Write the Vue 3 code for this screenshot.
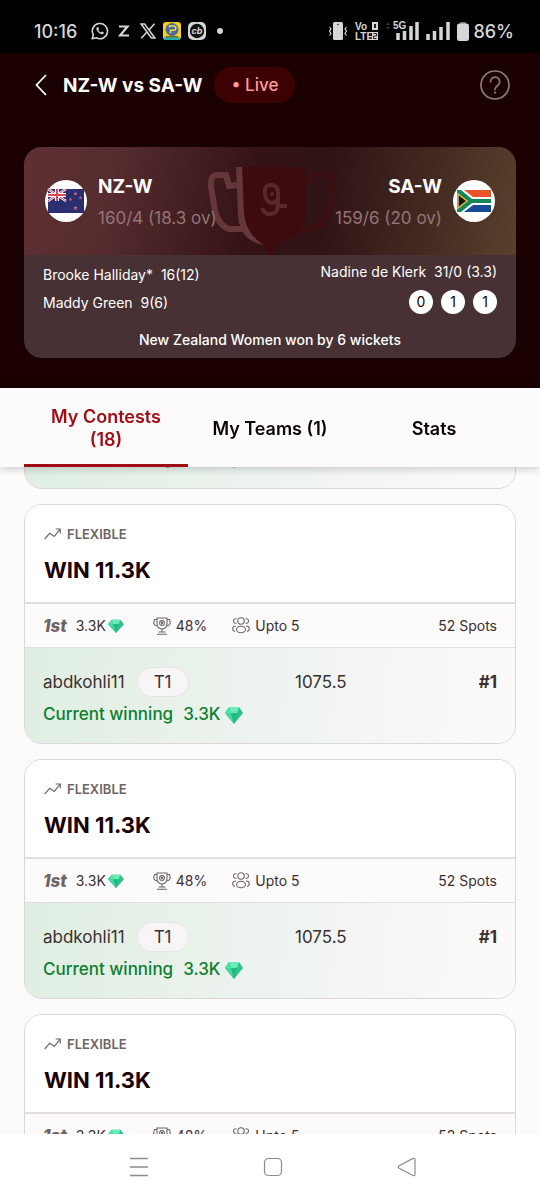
<script setup>
import { onMounted, ref } from 'vue'

const feed = ref(null)
const tabs = [
  { label: 'My Contests (18)', active: true },
  { label: 'My Teams (1)', active: false },
  { label: 'Stats', active: false },
]
const balls = [0, 1, 1]
const contests = [1, 2, 3, 4].map((id) => ({
  id,
  collapsed: id === 1,
  prize: 'WIN 11.3K',
  first: '3.3K',
  share: '48%',
  limit: 'Upto 5',
  spots: '52 Spots',
  user: 'abdkohli11',
  team: 'T1',
  points: '1075.5',
  rank: '#1',
  winning: '3.3K',
}))

onMounted(() => {
  feed.value.scrollTop = 44
})
</script>

<template>
  <div class="screen">
    <div class="status">
      <span class="clock">10:16</span>
      <div class="apps">
        <svg width="18" height="18" viewBox="0 0 18 18" fill="none" stroke="#d6d6d6" stroke-width="1.6">
          <path d="M1.2 16.8 2.3 12.8A7.6 7.6 0 1 1 5.2 15.7Z" stroke-linejoin="round" />
          <path d="M6 5.2c-1 1-.7 2.6.8 4.5 1.7 2.1 3.8 3.1 5.3 2.1.6-.4.8-.9.7-1.500l-1.900-.9-1 1c-1.200-.5-2.100-1.400-2.600-2.500l.7-.9-.8-2Z" fill="#d6d6d6" stroke="none" />
        </svg>
        <svg width="12" height="14" viewBox="0 0 12 14" fill="none" stroke="#d6d6d6" stroke-width="2.2">
          <path d="M1 2.500h8.500L2 11.500h9" />
        </svg>
        <svg width="16" height="16" viewBox="0 0 16 16" fill="none" stroke="#d6d6d6">
          <path d="M1.200 1h3.400l10.200 14h-3.400Z" stroke-width="1.5" />
          <path d="M14.500.7 9 7M6.800 9.200 1.200 15.300" stroke-width="1.6" />
        </svg>
        <svg width="18" height="18" viewBox="0 0 18 18">
          <rect width="18" height="18" rx="3" fill="#f5d01c" />
          <circle cx="9" cy="7.500" r="6.500" fill="#4a68a0" />
          <path d="M6.500 5.500V4h4.200a2.100 2.100 0 0 1 0 4.200H7.500v3" fill="none" stroke="#edda50" stroke-width="1.5" />
          <path d="M1 15.300h16v1.500a1.500 1.500 0 0 1-1.500 1.200h-13A1.500 1.500 0 0 1 1 16.500Z" fill="#25a7ad" />
          <path d="M3 14.700h12" stroke="#55612e" stroke-width="1.2" />
        </svg>
        <svg width="18" height="18" viewBox="0 0 18 18">
          <rect x="1" y="1" width="16" height="16" rx="4" fill="#d6d6d6" stroke="#d6d6d6" stroke-width="2" />
          <circle cx="9" cy="9" r="7.200" fill="#111" />
          <text x="9" y="12" text-anchor="middle" class="cb">cb</text>
        </svg>
        <svg width="6" height="6" viewBox="0 0 6 6"><circle cx="3" cy="3" r="3" fill="#d6d6d6" /></svg>
      </div>
      <div class="signals">
        <svg width="18" height="18" viewBox="0 0 18 18">
          <rect x="4" width="10" height="18" rx="1.500" fill="#d6d6d6" />
          <circle cx="9" cy="2.500" r=".8" fill="#222" />
          <path d="m.5 5 1.500 2-1.500 2L2 11.500.5 13.500M17.500 5 16 7l1.500 2-1.500 2.500 1.500 2" fill="none" stroke="#d6d6d6" stroke-width="1.2" />
        </svg>
        <svg class="volte" width="24" height="20" viewBox="0 0 24 20">
          <text x="0" y="9" class="tiny">Vo</text>
          <text x="0" y="19" class="tiny">LTE</text>
          <rect x="17" y="1" width="6" height="8" fill="#d6d6d6" />
          <rect x="19" y="3" width="2" height="4" fill="#222" />
          <rect x="17" y="11" width="6" height="8" fill="#d6d6d6" />
          <path d="M18.500 12.500h3v2.500h-3v2.500h3" fill="none" stroke="#222" stroke-width="1" />
        </svg>
        <svg class="fiveg" width="34" height="20" viewBox="0 0 34 20">
          <path d="m1 4 2-2.500L5 4ZM1 6l2 2.500L5 6Z" fill="#3a3a3a" />
          <text x="8" y="8" class="tiny">5G</text>
          <path d="M13 12v7M19.500 10v9M26 5v14M32 1v18" stroke="#d6d6d6" stroke-width="3.500" />
        </svg>
        <svg class="bars" width="24" height="20" viewBox="0 0 24 20">
          <path d="M2 13v6M8.500 10v9M15 6v13M22 1v18" stroke="#d6d6d6" stroke-width="3.500" />
        </svg>
        <svg width="12" height="19" viewBox="0 0 12 19" fill="#d6d6d6">
          <rect x="3" width="6" height="3" rx="1" fill="#777" />
          <rect y="1.500" width="12" height="17.500" rx="2.500" />
        </svg>
        <span class="charge">86%</span>
      </div>
    </div>

    <header class="hero">
      <div class="topbar">
        <button class="icon-btn" aria-label="Back">
          <svg width="12" height="22" viewBox="0 0 12 22" fill="none" stroke="#fff" stroke-width="1.8"><path d="M11 1 1.500 11 11 21" /></svg>
        </button>
        <h1>NZ-W vs SA-W</h1>
        <span class="live">• Live</span>
        <button class="icon-btn help" aria-label="Help">
          <svg width="30" height="30" viewBox="0 0 30 30" fill="none" stroke="#8b7b7b" stroke-width="1.7">
            <circle cx="15" cy="15" r="14" />
            <path d="M10.500 11.700a4.600 4.600 0 1 1 7.300 3.700c-1.800 1.300-2.800 2-2.800 4" stroke-linecap="round" />
            <circle cx="15" cy="22.500" r=".8" fill="#8b7b7b" stroke-width=".8" />
          </svg>
        </button>
      </div>

      <section class="match">
        <div class="score">
          <svg class="cup" width="136" height="96" viewBox="0 0 136 96" fill="none">
            <path d="M38 8h66v49q-2 17-20 24l-12 6-2 9h-4l-4-9Q41 76 38 55Z" fill="#3d0b0e" />
            <path d="M104 24l8-9h11q9 1 7 15l-5 26q-3 11-16 14l-10 2" stroke="#3c1013" stroke-width="6" />
            <path d="m35 26-8 1-3-11h-9q-7 0-6 12l4 24q4 15 14 18h17" stroke="#65373a" stroke-width="6" />
            <path d="M34 8h6l2 47q2 20 20 31Q38 82 36 57Z" fill="#65373a" />
            <path d="M60 49q2 6 8 6 8 0 8-10V34q0-8-7-8t-6 8q0 9 7 10 4 0 6-4M76 47h9" stroke="#57282d" stroke-width="4" />
            <circle cx="70" cy="35" r="2" fill="#57282d" />
          </svg>
          <div class="side">
            <svg class="flag" width="42" height="42" viewBox="0 0 42 42">
              <circle cx="21" cy="21" r="21" fill="#fff" />
              <path d="M3 9h36v24H3Z" fill="#2b2f70" />
              <path d="m3 9 18 12M21 9 3 21" stroke="#fff" stroke-width="2.500" />
              <path d="m3 9 18 12M21 9 3 21" stroke="#d94854" stroke-width="1" />
              <path d="M12 9v12M3 15h18" stroke="#fff" stroke-width="4" />
              <path d="M12 9v12M3 15h18" stroke="#d94854" stroke-width="2.2" />
              <g fill="#c8668a">
                <path d="m30.500 11.500.6 1.400 1.500.1-1.200 1 .4 1.500-1.300-.8-1.300.8.4-1.500-1.200-1 1.500-.1Z" />
                <path d="m25.500 17.500.5 1.200 1.200.1-.9.9.3 1.200-1.100-.7-1.100.7.3-1.200-.9-.9 1.200-.1Z" />
                <path d="m35.500 16 .5 1.100 1.200.1-.9.8.3 1.200-1.100-.6-1.100.6.3-1.200-.9-.8 1.200-.1Z" />
                <path d="m30.500 25.500.7 1.600 1.600.1-1.200 1.100.4 1.600-1.500-.9-1.500.9.4-1.600-1.200-1.100 1.600-.1Z" />
              </g>
            </svg>
            <div>
              <h2>NZ-W</h2>
              <p>160/4 (18.3 ov)</p>
            </div>
          </div>
          <div class="side away">
            <div>
              <h2>SA-W</h2>
              <p>159/6 (20 ov)</p>
            </div>
            <svg class="flag" width="42" height="42" viewBox="0 0 42 42">
              <circle cx="21" cy="21" r="21" fill="#fff" />
              <path d="M11 10h27v7H20Z" fill="#e9542c" />
              <path d="M11 32h27v-7H20Z" fill="#164c96" />
              <path d="M4 10h4l11 9h19v4H19L8 32H4Z" fill="#12885a" />
              <path d="m5 14 9 7-9 7Z" fill="#141414" stroke="#eab73c" stroke-width="1.5" />
            </svg>
          </div>
        </div>
        <div class="players">
          <div class="batters">
            <span>Brooke Halliday*&nbsp; 16(12)</span>
            <span>Maddy Green&nbsp; 9(6)</span>
          </div>
          <div class="bowler">
            <span>Nadine de Klerk&nbsp; 31/0 (3.3)</span>
            <div class="balls"><b v-for="(ball, i) in balls" :key="i">{{ ball }}</b></div>
          </div>
        </div>
        <p class="result">New Zealand Women won by 6 wickets</p>
      </section>
    </header>

    <nav class="tabs">
      <button v-for="tab in tabs" :key="tab.label" :class="{ active: tab.active }">{{ tab.label }}</button>
    </nav>

    <main ref="feed" class="feed">
      <article v-for="c in contests" :key="c.id" class="contest" :class="{ collapsed: c.collapsed }">
        <template v-if="!c.collapsed">
          <div class="head">
            <div class="kind">
              <svg width="17" height="12" viewBox="0 0 17 12" fill="none" stroke="#6d6565" stroke-width="1.2"><path d="m.7 11 5-5.800 4.600 3.200L15.800 1.500M11.700 1h4.500v4.500" /></svg>
              <span>FLEXIBLE</span>
            </div>
            <h3>{{ c.prize }}</h3>
          </div>
          <div class="facts">
            <em>1st</em>
            <span class="first">{{ c.first }}</span>
            <svg class="gem" width="16" height="16" viewBox="0 0 18 18">
              <path d="M4 2h10l4 5-9 10L0 7Z" fill="#2cc28a" />
              <path d="M4 2h10l-2 5H6Z" fill="#6cecb5" /><path d="M0 7h6l3 10Z" fill="#43d8a0" /><path d="M6 7h6L9 17Z" fill="#25b982" /><path d="m4 2 2 5H0Z" fill="#4fe0ab" />
            </svg>
            <svg class="trophy" width="18" height="18" viewBox="0 0 18 18" fill="none" stroke="#6d6666" stroke-width="1.1">
              <path d="M4 1h10v5.500q0 5-5 5.500-5-.5-5-5.500ZM4 2.500H1.500L.7 6q.3 2.500 3.800 3M14 2.500h2.500l.8 3.500q-.3 2.500-3.800 3M9 12v3M5.500 15h7M4 17.300h10" />
              <circle cx="9" cy="6" r="2.400" /><circle cx="9" cy="6" r=".6" />
            </svg>
            <span>{{ c.share }}</span>
            <svg class="people" width="18" height="17" viewBox="0 0 18 17" fill="none" stroke="#6d6666" stroke-width="1.1">
              <circle cx="9" cy="4" r="3.200" />
              <path d="M4.500 1.700Q1.500 1.500 1.500 4t3 2.300M13.500 1.700q3-.2 3 2.300t-3 2.300" />
              <ellipse cx="9" cy="12.500" rx="4.500" ry="3.300" />
              <path d="M4 9Q.7 9 .7 11.500T3 14.500M14 9q3.300 0 3.300 2.500T15 14.500" />
            </svg>
            <span>{{ c.limit }}</span>
            <span class="spots">{{ c.spots }}</span>
          </div>
        </template>
        <div class="entry">
          <div v-if="!c.collapsed" class="row">
            <div class="who"><span>{{ c.user }}</span><span class="team">{{ c.team }}</span></div>
            <span>{{ c.points }}</span>
            <strong>{{ c.rank }}</strong>
          </div>
          <div class="winning">
            <span>Current winning</span>
            <span>{{ c.winning }}</span>
            <svg width="18" height="18" viewBox="0 0 18 18">
              <path d="M4 1h10l4 6-9 11L0 7Z" fill="#2cc28a" />
              <path d="M4 1h10l-2 6H6Z" fill="#6cecb5" /><path d="M0 7h6l3 11Z" fill="#43d8a0" /><path d="M6 7h6L9 18Z" fill="#25b982" /><path d="m4 1 2 6H0Z" fill="#4fe0ab" />
            </svg>
          </div>
        </div>
      </article>
    </main>

    <footer class="sysnav">
      <button class="icon-btn" aria-label="Recent apps">
        <svg width="20" height="20" viewBox="0 0 20 20" fill="none" stroke="#8c8c8c" stroke-width="1.5"><path d="M1 1.500h18M1 10h18M1 18.500h18" /></svg>
      </button>
      <button class="icon-btn" aria-label="Home">
        <svg width="20" height="20" viewBox="0 0 20 20" fill="none" stroke="#8c8c8c" stroke-width="1.2"><rect x="1.500" y="1.500" width="17" height="17" rx="4" /></svg>
      </button>
      <button class="icon-btn" aria-label="Back to previous app">
        <svg width="20" height="20" viewBox="0 0 20 20" fill="none" stroke="#8c8c8c" stroke-width="1.2"><path d="M2.200 8.800 16 1.400q2-.7 2 1.600v14q0 2.300-2 1.500L2.200 11.200q-1.800-1.200 0-2.400Z" /></svg>
      </button>
    </footer>
  </div>
</template>

<style>
body {
  background: #fff;
}
</style>

<style scoped>
* {
  box-sizing: border-box;
  margin: 0;
}
.screen {
  display: flex;
  flex-direction: column;
  height: 100vh;
  font-family: Inter, "Open Sans", sans-serif;
  font-size: 14px;
  color: #3a3032;
}
button {
  padding: 0;
  border: 0;
  background: none;
  font: inherit;
  cursor: pointer;
}
svg {
  display: block;
  flex: none;
}
.status {
  flex: none;
  display: flex;
  align-items: center;
  padding: 9px 26px 0 34px;
  height: 53px;
  background: #000;
  color: #d6d6d6;
}
.clock {
  font-size: 18px;
  font-weight: 500;
}
.apps {
  display: flex;
  align-items: center;
  gap: 7px;
  margin-left: 14px;
}
.apps svg:nth-child(2) {
  margin: 0 3px 0 2px;
}
.apps svg:last-child {
  margin-left: 4px;
}
.signals {
  display: flex;
  align-items: center;
  margin-left: auto;
}
.volte {
  margin-left: 8px;
}
.fiveg {
  margin-left: 6px;
}
.bars {
  margin: 0 7px;
}
.charge {
  margin-left: 4px;
  font-size: 18px;
  font-weight: 500;
}
.cb {
  font: italic 700 9px Inter, sans-serif;
  fill: #d6d6d6;
}
.tiny {
  font: 700 10px "Liberation Sans", sans-serif;
  fill: #d6d6d6;
}
.hero {
  flex: none;
  padding: 14px 24px 30px;
  background: #1a0000;
  color: #fff;
}
.topbar {
  display: flex;
  align-items: center;
  height: 36px;
  padding: 0 6px 0 11px;
}
h1 {
  margin-left: 16px;
  font-size: 19px;
  font-weight: 700;
}
.live {
  margin-left: 12px;
  padding: 0 17px;
  border-radius: 18px;
  background: #3d0003;
  color: #ff9b9b;
  font-size: 17px;
  font-weight: 500;
  line-height: 36px;
}
.help {
  margin-left: auto;
}
.match {
  margin-top: 44px;
  border-radius: 18px;
  overflow: hidden;
  background: #473134;
}
.score {
  position: relative;
  display: flex;
  justify-content: space-between;
  height: 108px;
  padding: 28px 21px 0;
  background: linear-gradient(100deg, #5e3033 0%, #562c2f 18%, #351315 46%, #2f1315 60%, #432b21 82%, #5a402d 100%);
}
.cup {
  position: absolute;
  top: 12px;
  left: calc(50% - 68px);
}
.side {
  position: relative;
  display: flex;
  gap: 11px;
}
.away {
  text-align: right;
}
.flag {
  margin-top: 5px;
}
h2 {
  font-size: 19px;
  font-weight: 700;
  line-height: 24px;
}
.side p {
  margin-top: 7px;
  font-size: 17px;
  line-height: 24px;
  color: #947476;
}
.players {
  display: flex;
  justify-content: space-between;
  padding: 6px 19px 0;
  line-height: 28px;
}
.batters {
  display: flex;
  flex-direction: column;
}
.bowler {
  display: flex;
  flex-direction: column;
  align-items: flex-end;
  line-height: 22px;
}
.balls {
  display: flex;
  gap: 8px;
  margin-top: 7px;
}
.balls b {
  width: 24px;
  border-radius: 50%;
  background: #fff;
  color: #1a0000;
  font-size: 14px;
  font-weight: 400;
  line-height: 24px;
  text-align: center;
}
.result {
  padding: 13px 16px 8px;
  font-size: 14px;
  font-weight: 500;
  line-height: 20px;
  text-align: center;
}
.tabs {
  position: relative;
  flex: none;
  display: grid;
  grid-template-columns: repeat(3, 1fr);
  height: 79px;
  padding: 0 24px;
  background: #fdfafb;
  box-shadow: 0 2px 8px #00000030;
}
.tabs button {
  padding: 4px 24px 0;
  border-bottom: 3px solid transparent;
  color: #0c0506;
  font-size: 18px;
  font-weight: 600;
  line-height: 23px;
}
.tabs .active {
  border-color: #a00d15;
  color: #a00d15;
}
.feed {
  flex: 1;
  min-height: 0;
  overflow-y: auto;
  scrollbar-width: none;
  padding: 16px 24px;
  background: #fdfafb;
}
.contest {
  margin-bottom: 15px;
  border: 1px solid #dcd7d8;
  border-radius: 18px;
  overflow: hidden;
}
.head {
  height: 99px;
  padding: 19px 19px 0;
  border-bottom: 2px solid #e2dede;
  background: #fff;
}
.kind {
  display: flex;
  align-items: center;
  gap: 6px;
  color: #6d6565;
  font-size: 13px;
  font-weight: 600;
  line-height: 20px;
}
h3 {
  margin-top: 12px;
  color: #1a0000;
  font-size: 22px;
  font-weight: 700;
  line-height: 28px;
}
.facts {
  display: flex;
  align-items: center;
  height: 44px;
  padding: 0 18px;
  border-bottom: 1px solid #e2dede;
}
.facts em {
  color: #6d6565;
  font-size: 17px;
  font-weight: 800;
}
.first {
  margin-left: 9px;
}
.gem {
  margin-left: 2px;
}
.trophy {
  margin: 0 5px 0 29px;
}
.people {
  margin: 0 5px 0 25px;
}
.spots {
  margin-left: auto;
}
.entry {
  height: 95px;
  padding: 19px 18px 0;
  background: linear-gradient(95deg, #dfeee2, #eef3ef 50%, #fbfaf9 95%);
  font-size: 17px;
}
.collapsed .entry {
  height: 48px;
  padding-top: 1px;
}
.row {
  display: grid;
  grid-template-columns: 252px 1fr auto;
  align-items: center;
}
.who {
  display: flex;
  align-items: center;
  gap: 12px;
}
.team {
  padding: 0 16px;
  border: 1px solid #e9e5e6;
  border-radius: 15px;
  background: #f8f5f6;
  line-height: 28px;
}
.winning {
  display: flex;
  align-items: center;
  gap: 10px;
  color: #0b8030;
  font-weight: 500;
  line-height: 35px;
}
.winning svg {
  margin-left: -6px;
}
.sysnav {
  flex: none;
  display: flex;
  justify-content: center;
  align-items: center;
  gap: 114px;
  height: 66px;
  padding-left: 6px;
  background: #fff;
}
</style>
